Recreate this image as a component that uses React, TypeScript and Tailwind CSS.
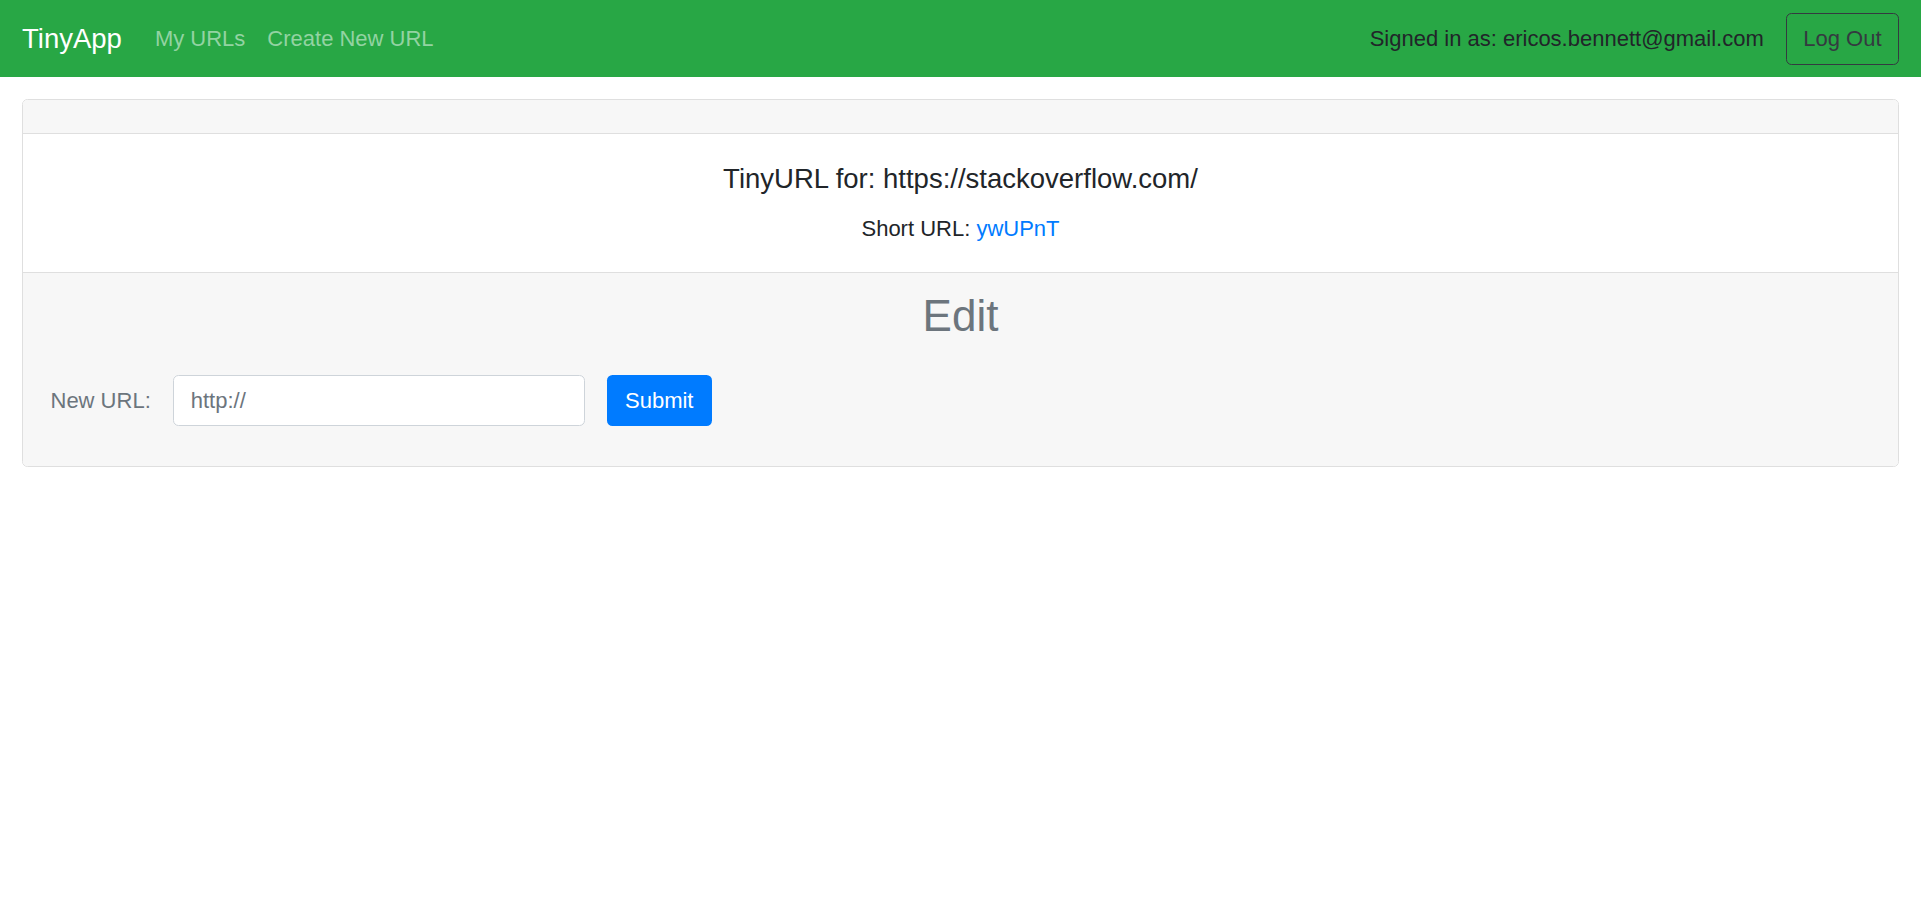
import React from "react";

export default function App() {
  return (
    <div
      className="min-h-screen bg-white text-[#212529]"
      style={{ fontFamily: '"Liberation Sans", Arial, sans-serif' }}
    >
      <nav className="h-[77px] bg-[#28a745] flex items-center justify-between px-[22px]">
        <div className="flex items-center">
          <span className="text-[27.5px] leading-[41px] text-white mr-[22px]">TinyApp</span>
          <a className="text-[22px] leading-[33px] text-[#93d3a2] px-[11px]">My URLs</a>
          <a className="text-[22px] leading-[33px] text-[#93d3a2] px-[11px]">Create New URL</a>
        </div>
        <div className="flex items-center">
          <span className="text-[22px] leading-[33px] text-[#212529] mr-[22px]">
            Signed in as: ericos.bennett@gmail.com
          </span>
          <button className="h-[52px] px-[16.5px] border border-[#343a40] rounded-[5.5px] text-[22px] leading-[33px] text-[#343a40]">
            Log Out
          </button>
        </div>
      </nav>
      <main className="px-[22px] pt-[22px]">
        <div className="border border-[#dfdfdf] rounded-[5.5px] overflow-hidden">
          <div className="h-[34px] bg-[#f7f7f7] border-b border-[#dfdfdf]" />
          <div className="px-[27.5px] pt-[27.5px] pb-[27.5px] flex flex-col items-center">
            <h5 className="text-[27.5px] leading-[33px] text-[#212529]">
              TinyURL for: https://stackoverflow.com/
            </h5>
            <p className="mt-[17px] text-[22px] leading-[33px] text-[#212529]">
              Short URL: <a className="text-[#007bff]">ywUPnT</a>
            </p>
          </div>
          <div className="bg-[#f7f7f7] border-t border-[#dfdfdf] px-[27.5px] pt-[16px] pb-[40px]">
            <h2 className="text-center text-[44px] leading-[53px] text-[#6c757d]">Edit</h2>
            <form className="mt-[33px] flex items-center">
              <label className="text-[22px] leading-[33px] text-[#6c757d]">New URL:</label>
              <input
                type="text"
                placeholder="http://"
                className="ml-[22px] w-[412px] h-[51px] bg-white border border-[#ced4da] rounded-[5.5px] px-[17px] text-[22px] text-[#495057] placeholder:text-[#6c757d] outline-none"
                style={{ fontFamily: '"Liberation Sans", Arial, sans-serif' }}
              />
              <button
                type="button"
                className="ml-[22px] h-[51px] w-[105px] bg-[#007bff] text-white rounded-[5.5px] text-[22px] leading-[33px]"
              >
                Submit
              </button>
            </form>
          </div>
        </div>
      </main>
    </div>
  );
}
